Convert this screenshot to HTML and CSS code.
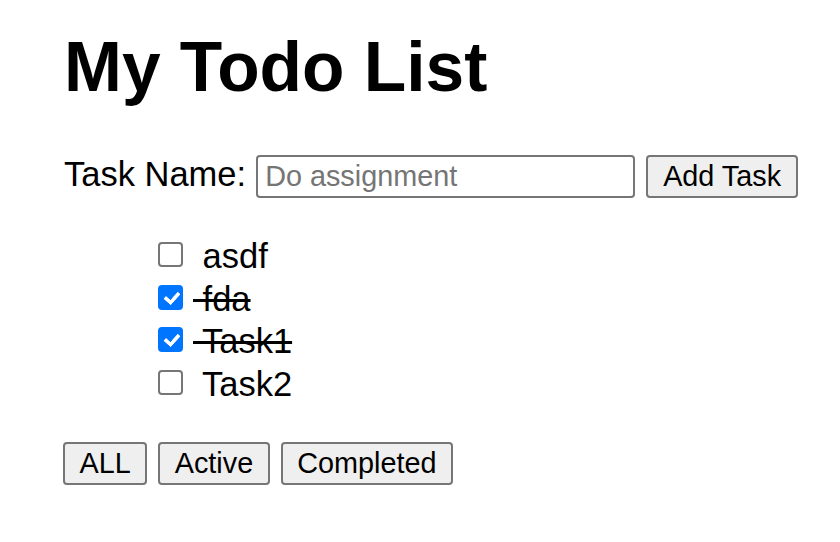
FILE: index.html
```html
<!DOCTYPE html>
<html lang="en">
<head>
<meta charset="utf-8">
<title>My Todo List</title>
<link rel="stylesheet" href="styles.css">
</head>
<body>
<div class="app">
  <h1 class="title">My Todo List</h1>
  <div class="add-row">
    <label class="add-label" for="task">Task Name:</label>
    <input class="add-input" id="task" type="text" placeholder="Do assignment">
    <button class="btn add-btn">Add Task</button>
  </div>
  <ul class="todo-list">
    <li class="todo-item"><input class="todo-check" type="checkbox"><span class="todo-text"> asdf</span></li>
    <li class="todo-item"><input class="todo-check" type="checkbox" checked><span class="todo-text done"> fda</span></li>
    <li class="todo-item"><input class="todo-check" type="checkbox" checked><span class="todo-text done"> Task1</span></li>
    <li class="todo-item"><input class="todo-check" type="checkbox"><span class="todo-text"> Task2</span></li>
  </ul>
  <div class="filters">
    <button class="btn filter-btn">ALL</button>
    <button class="btn filter-btn">Active</button>
    <button class="btn filter-btn">Completed</button>
  </div>
</div>
</body>
</html>
```

FILE: styles.css
```css
html, body {
  margin: 0;
  padding: 0;
  background: #fff;
}
body {
  font-family: "Liberation Sans", Arial, sans-serif;
  color: #000;
}
.app {
  padding-left: 64px;
}
.title {
  font-size: 69.5px;
  font-weight: bold;
  line-height: normal;
  margin: 27px 0 0;
}
.add-row {
  display: flex;
  align-items: baseline;
  margin-top: 48px;
}
.add-label {
  font-size: 34.5px;
}
.add-input {
  box-sizing: border-box;
  width: 379px;
  height: 43px;
  margin: 0 0 0 10px;
  padding: 0 7px;
  border: 2px solid #767676;
  border-radius: 4px;
  font-family: "Liberation Sans", Arial, sans-serif;
  font-size: 28.8px;
  color: #000;
  background: #fff;
  outline: none;
}
.add-input::placeholder {
  color: #757575;
}
.btn {
  box-sizing: border-box;
  height: 43px;
  margin: 0;
  padding: 0 15px;
  border: 2px solid #767676;
  border-radius: 4px;
  background: #efefef;
  font-family: "Liberation Sans", Arial, sans-serif;
  font-size: 28.8px;
  color: #000;
}
.add-btn {
  margin-left: 11px;
}
.todo-list {
  list-style: none;
  margin: 37px 0 0;
  padding: 0 0 0 94px;
}
.todo-item {
  height: 42.7px;
  font-size: 34.5px;
  line-height: 42.7px;
}
.todo-check {
  appearance: none;
  -webkit-appearance: none;
  box-sizing: border-box;
  position: relative;
  width: 25px;
  height: 25px;
  margin: 0 10px 0 0;
  border: 2px solid #767676;
  border-radius: 4px;
  background: #fff;
  vertical-align: 1px;
}
.todo-check:checked {
  background: #0075ff;
  border-color: #0075ff;
}
.todo-check:checked::after {
  content: "";
  position: absolute;
  left: 6.5px;
  top: 2px;
  width: 6px;
  height: 11px;
  border: solid #fff;
  border-width: 0 4px 4px 0;
  border-radius: 1px;
  transform: rotate(42deg);
}
.todo-text {
  white-space: pre;
}
.todo-text.done {
  text-decoration: line-through;
}
.filters {
  display: flex;
  gap: 11px;
  margin-top: 36px;
  margin-left: -1px;
}
.filter-btn {
  padding: 0 14.5px;
}
```
